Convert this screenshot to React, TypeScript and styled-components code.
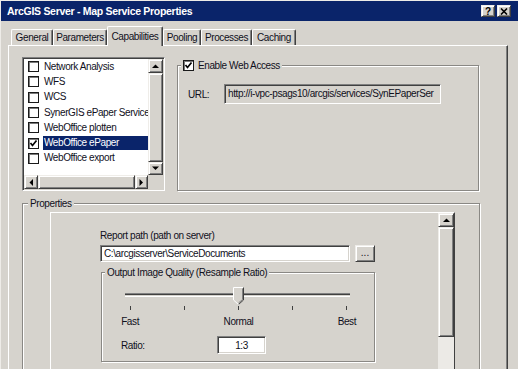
import React from 'react';
import styled, { createGlobalStyle } from 'styled-components';

const face = '#d6d3cd';
const navy = '#0a246a';

const GlobalStyle = createGlobalStyle`
  html, body {
    margin: 0;
    padding: 0;
    background: ${face};
  }
  body {
    font-family: "Liberation Sans", Arial, sans-serif;
    font-size: 10px;
    color: #10101c;
  }
  * {
    box-sizing: border-box;
  }
`

const Window = styled.div`
    width: 518px;
    height: 369px;
    overflow: hidden;
    display: flex;
    flex-direction: column;
    background: ${face};
    border-top: 1px solid #eeece8;
    border-left: 1px solid #eeece8;
    letter-spacing: -0.4px;
`

const TitleBar = styled.div`
    height: 20px;
    flex-shrink: 0;
    display: flex;
    align-items: center;
    padding: 0 7px 0 6px;
    background: ${navy};
    color: #fff;
    font-weight: bold;
    font-size: 10.5px;
    letter-spacing: -0.3px;
`

const TitleText = styled.div`
    flex: 1;
`

const CaptionButtons = styled.div`
    display: flex;
    gap: 2px;
`

const Raised = styled.div`
    background: ${face};
    border: 1px solid;
    border-color: #efede9 #404040 #404040 #efede9;
    box-shadow: inset 1px 1px #fff, inset -1px -1px #808080;
    display: flex;
    align-items: center;
    justify-content: center;
`

const CaptionButton = styled(Raised)`
    width: 14px;
    height: 12px;
    color: #000;
    font-size: 10px;
    font-weight: bold;
    letter-spacing: 0;
`

const Body = styled.div`
    flex: 1;
    display: flex;
    flex-direction: column;
    padding: 5px 10px 0 7px;
`

const TabStrip = styled.div`
    height: 19px;
    flex-shrink: 0;
    display: flex;
    align-items: flex-end;
    padding-left: 3px;
    position: relative;
    z-index: 1;
`

const Tab = styled.div<{ $w: number; $active?: boolean }>`
    width: ${p => p.$w}px;
    height: ${p => (p.$active ? 20 : 16)}px;
    margin-bottom: ${p => (p.$active ? -1 : 0)}px;
    background: ${face};
    border-top: 1px solid #fff;
    border-left: 1px solid #fff;
    border-right: 1px solid #404040;
    box-shadow: inset -1px 0 #808080;
    border-radius: 2px 2px 0 0;
    display: flex;
    align-items: center;
    justify-content: center;
    white-space: nowrap;
`

const TabPanel = styled.div`
    width: 500px;
    flex: 1;
    display: flex;
    flex-direction: column;
    border-top: 1px solid #fff;
    border-left: 1px solid #fff;
    border-right: 1px solid #404040;
    box-shadow: inset -1px 0 #808080;
    padding: 11px 0 0 13px;
`

const TopRow = styled.div`
    display: flex;
    align-items: flex-start;
    gap: 12px;
`

const Sunken = styled.div`
    border: 1px solid;
    border-color: #808080 #fff #fff #808080;
    box-shadow: inset 1px 1px #404040, inset -1px -1px ${face};
`

const ListBox = styled(Sunken)`
    width: 143px;
    height: 134px;
    padding: 1px;
    background: #fff;
    display: grid;
    grid-template-columns: 1fr 15px;
    grid-template-rows: 1fr 14px;
`

const Items = styled.div`
    display: flex;
    flex-direction: column;
    overflow: hidden;
`

const Item = styled.div`
    height: 15.3px;
    flex-shrink: 0;
    display: flex;
    align-items: center;
    padding-left: 4px;
`

const CheckBox = styled.div`
    width: 11px;
    height: 11px;
    flex-shrink: 0;
    background: #fff;
    border: 1px solid #1a1a1a;
    box-shadow: inset 1px 1px #7a7a7a;
    display: flex;
    align-items: center;
    justify-content: center;
`

const ItemLabel = styled.div<{ $selected?: boolean }>`
    flex: 1;
    margin-left: 4px;
    padding-left: 1px;
    height: 14px;
    line-height: 14px;
    white-space: nowrap;
    overflow: hidden;
    background: ${p => (p.$selected ? navy : 'transparent')};
    color: ${p => (p.$selected ? '#fff' : 'inherit')};
`

const ScrollBar = styled.div<{ $horizontal?: boolean }>`
    display: flex;
    flex-direction: ${p => (p.$horizontal ? 'row' : 'column')};
    background: ${face};
`

const ScrollButton = styled(Raised)<{ $w: number; $h: number }>`
    width: ${p => p.$w}px;
    height: ${p => p.$h}px;
    flex-shrink: 0;
`

const Thumb = styled(Raised)<{ $size?: number }>`
    flex: ${p => (p.$size ? `0 0 ${p.$size}px` : 1)};
`

const Track = styled.div`
    flex: 1;
    background: #eceae6;
`

const Corner = styled.div`
    background: ${face};
`

const Group = styled.fieldset<{ $w: number; $h: number }>`
    margin: 0;
    padding: 0;
    min-width: 0;
    width: ${p => p.$w}px;
    height: ${p => p.$h}px;
    flex-shrink: 0;
    border: 1px solid #8a8884;
    box-shadow: inset 1px 1px #fff, 1px 1px #fff;
`

const Legend = styled.legend<{ $offset: number }>`
    margin-left: ${p => p.$offset}px;
    padding: 0 2px;
    height: 13px;
    line-height: 13px;
    background: ${face};
`

const LegendInner = styled.span`
    display: inline-flex;
    align-items: center;
    gap: 4px;
`

const WebGroup = styled(Group)`
    margin-top: 2px;
`

const UrlRow = styled.div`
    display: flex;
    align-items: center;
    margin: 12px 0 0 10px;
`

const UrlLabel = styled.div`
    width: 36px;
`

const UrlBox = styled(Sunken)`
    width: 217px;
    height: 20px;
    padding: 0 3px;
    line-height: 18px;
    background: ${face};
    white-space: nowrap;
    overflow: hidden;
`

const PropsGroup = styled(Group)`
    margin-top: 6px;
`

const InnerPanel = styled.div`
    width: 405px;
    height: 170px;
    margin: 2px 0 0 27px;
    display: flex;
    border: 1px solid;
    border-color: #fff #404040 #404040 #fff;
`

const PanelContent = styled.div`
    flex: 1;
    padding: 17px 0 0 49px;
`

const FieldLabel = styled.div`
    height: 12px;
    line-height: 12px;
    margin-bottom: 3px;
`

const PathRow = styled.div`
    display: flex;
    gap: 5px;
`

const TextBox = styled(Sunken)<{ $w: number; $h: number; $center?: boolean }>`
    width: ${p => p.$w}px;
    height: ${p => p.$h}px;
    background: #fff;
    padding: 0 3px;
    display: flex;
    align-items: center;
    justify-content: ${p => (p.$center ? 'center' : 'flex-start')};
    white-space: nowrap;
    overflow: hidden;
`

const BrowseButton = styled(Raised)`
    width: 20px;
    height: 17px;
    padding-bottom: 3px;
    letter-spacing: 0;
`

const QualityGroup = styled(Group)`
    margin: 4px 0 0 1px;
`

const SliderArea = styled.div`
    position: relative;
    height: 26px;
    padding-top: 14px;
`

const SliderTrack = styled.div`
    height: 4px;
    margin: 0 24px 0 23px;
    border-top: 1px solid #808080;
    border-bottom: 1px solid #fff;
    box-shadow: inset 0 1px #404040;
`

const SliderThumb = styled.svg`
    position: absolute;
    top: 8px;
    left: calc(50% - 5px);
`

const TickGrid = styled.div`
    display: grid;
    grid-template-columns: repeat(5, 1fr);
    padding-left: 1px;
    margin-top: 1px;
`

const TickCell = styled.div`
    display: flex;
    flex-direction: column;
    align-items: center;
`

const Tick = styled.div`
    width: 1px;
    height: 4px;
    background: #404040;
`

const TickLabel = styled.div`
    height: 12px;
    line-height: 12px;
    margin-top: 6px;
    white-space: nowrap;
`

const RatioRow = styled.div`
    display: flex;
    align-items: center;
    margin: 8px 0 0 19px;
`

const RatioLabel = styled.div`
    width: 96px;
`

const Check = () => (
    <svg width="9" height="9" viewBox="0 0 9 9">
        <polyline points="1.5,4 3.5,6.5 7.5,1.5" fill="none" stroke="#000" strokeWidth="1.7" />
    </svg>
)

const Arrow = ({ dir }: { dir: 'up' | 'down' | 'left' | 'right' }) => {
    const pts = {
        up: '0,4 7,4 3.5,0.5',
        down: '0,0.5 7,0.5 3.5,4',
        left: '4,0 4,7 0.5,3.5',
        right: '0.5,0 0.5,7 4,3.5',
    }[dir]
    const vertical = dir === 'up' || dir === 'down'
    return (
        <svg width={vertical ? 7 : 5} height={vertical ? 5 : 7}>
            <polygon points={pts} fill="#000" />
        </svg>
    )
}

const CloseGlyph = () => (
    <svg width="8" height="7" viewBox="0 0 8 7">
        <path d="M1 0.5 L7 6.5 M7 0.5 L1 6.5" stroke="#000" strokeWidth="1.6" />
    </svg>
)

const tabs = [
    { label: 'General', w: 42 },
    { label: 'Parameters', w: 54 },
    { label: 'Capabilities', w: 56, active: true },
    { label: 'Pooling', w: 38 },
    { label: 'Processes', w: 51 },
    { label: 'Caching', w: 44 },
]

const capabilities = [
    { label: 'Network Analysis' },
    { label: 'WFS' },
    { label: 'WCS' },
    { label: 'SynerGIS ePaper Service' },
    { label: 'WebOffice plotten' },
    { label: 'WebOffice ePaper', checked: true, selected: true },
    { label: 'WebOffice export' },
]

const ticks = ['Fast', '', 'Normal', '', 'Best']

function App() {
    return (
        <>
            <GlobalStyle />
            <Window>
                <TitleBar>
                    <TitleText>ArcGIS Server - Map Service Properties</TitleText>
                    <CaptionButtons>
                        <CaptionButton>?</CaptionButton>
                        <CaptionButton><CloseGlyph /></CaptionButton>
                    </CaptionButtons>
                </TitleBar>

                <Body>
                    <TabStrip>
                        {tabs.map(t => (
                            <Tab key={t.label} $w={t.w} $active={t.active}>{t.label}</Tab>
                        ))}
                    </TabStrip>

                    <TabPanel>
                        <TopRow>
                            <ListBox>
                                <Items>
                                    {capabilities.map(c => (
                                        <Item key={c.label}>
                                            <CheckBox>{c.checked && <Check />}</CheckBox>
                                            <ItemLabel $selected={c.selected}>{c.label}</ItemLabel>
                                        </Item>
                                    ))}
                                </Items>
                                <ScrollBar>
                                    <ScrollButton $w={15} $h={14}><Arrow dir="up" /></ScrollButton>
                                    <Thumb />
                                    <ScrollButton $w={15} $h={13}><Arrow dir="down" /></ScrollButton>
                                </ScrollBar>
                                <ScrollBar $horizontal>
                                    <ScrollButton $w={14} $h={14}><Arrow dir="left" /></ScrollButton>
                                    <Thumb />
                                    <ScrollButton $w={13} $h={14}><Arrow dir="right" /></ScrollButton>
                                </ScrollBar>
                                <Corner />
                            </ListBox>

                            <WebGroup $w={302} $h={132}>
                                <Legend $offset={3}>
                                    <LegendInner>
                                        <CheckBox><Check /></CheckBox>
                                        Enable Web Access
                                    </LegendInner>
                                </Legend>
                                <UrlRow>
                                    <UrlLabel>URL:</UrlLabel>
                                    <UrlBox>http://i-vpc-psags10/arcgis/services/SynEPaperSer</UrlBox>
                                </UrlRow>
                            </WebGroup>
                        </TopRow>

                        <PropsGroup $w={458} $h={200}>
                            <Legend $offset={5}>Properties</Legend>
                            <InnerPanel>
                                <PanelContent>
                                    <FieldLabel>Report path (path on server)</FieldLabel>
                                    <PathRow>
                                        <TextBox $w={250} $h={17}>C:\arcgisserver\ServiceDocuments</TextBox>
                                        <BrowseButton>...</BrowseButton>
                                    </PathRow>

                                    <QualityGroup $w={274} $h={96}>
                                        <Legend $offset={3}>Output Image Quality (Resample Ratio)</Legend>
                                        <SliderArea>
                                            <SliderTrack />
                                            <SliderThumb width="11" height="18" viewBox="0 0 11 18">
                                                <polygon points="0.5,0.5 10.5,0.5 10.5,13 5.5,17.5 0.5,13" fill={face} />
                                                <polyline points="0.5,13 0.5,0.5 10.5,0.5" fill="none" stroke="#fff" />
                                                <polyline points="10.5,0.5 10.5,13 5.5,17.5" fill="none" stroke="#404040" />
                                                <polyline points="9.5,1.5 9.5,12.5 5.5,16" fill="none" stroke="#808080" />
                                                <polyline points="0.5,13 5.5,17.5" fill="none" stroke="#fff" />
                                            </SliderThumb>
                                        </SliderArea>
                                        <TickGrid>
                                            {ticks.map((t, i) => (
                                                <TickCell key={i}>
                                                    <Tick />
                                                    <TickLabel>{t}</TickLabel>
                                                </TickCell>
                                            ))}
                                        </TickGrid>
                                        <RatioRow>
                                            <RatioLabel>Ratio:</RatioLabel>
                                            <TextBox $w={49} $h={18} $center>1:3</TextBox>
                                        </RatioRow>
                                    </QualityGroup>
                                </PanelContent>

                                <ScrollBar>
                                    <ScrollButton $w={16} $h={14}><Arrow dir="up" /></ScrollButton>
                                    <Thumb $size={110} />
                                    <Track />
                                </ScrollBar>
                            </InnerPanel>
                        </PropsGroup>
                    </TabPanel>
                </Body>
            </Window>
        </>
    );
}

export default App;
